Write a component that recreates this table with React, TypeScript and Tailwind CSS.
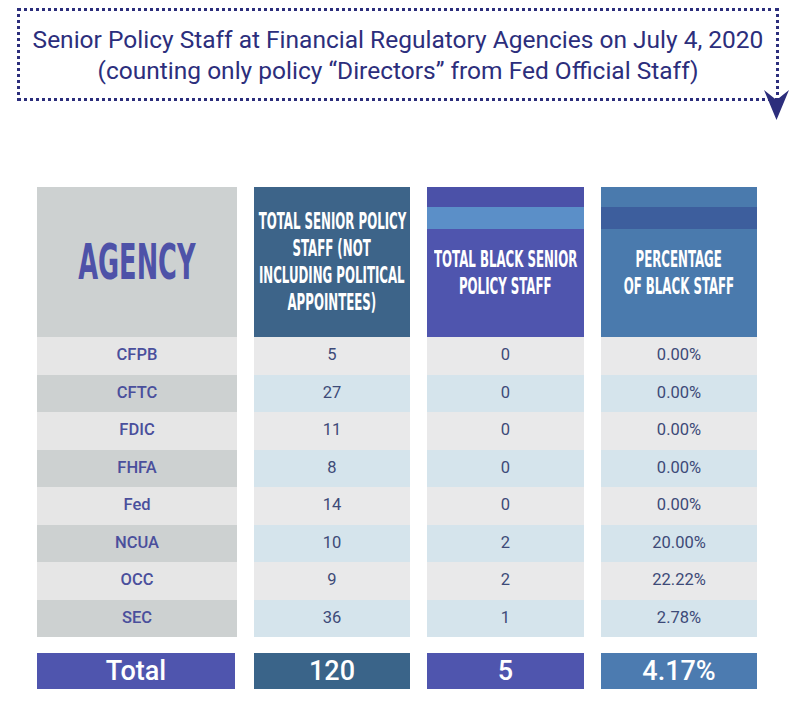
const rows = [
  { agency: "CFPB", total: "5", black: "0", pct: "0.00%" },
  { agency: "CFTC", total: "27", black: "0", pct: "0.00%" },
  { agency: "FDIC", total: "11", black: "0", pct: "0.00%" },
  { agency: "FHFA", total: "8", black: "0", pct: "0.00%" },
  { agency: "Fed", total: "14", black: "0", pct: "0.00%" },
  { agency: "NCUA", total: "10", black: "2", pct: "20.00%" },
  { agency: "OCC", total: "9", black: "2", pct: "22.22%" },
  { agency: "SEC", total: "36", black: "1", pct: "2.78%" },
];

const condensed = "font-['Liberation_Sans_Narrow','DejaVu_Sans_Condensed',sans-serif] font-bold";

const HeadLine = ({ children }: { children: React.ReactNode }) => (
  <span className="block whitespace-nowrap scale-x-[0.57]">{children}</span>
);

const App: React.FC = () => {
  return (
    <div className="w-[796px] h-[706px] bg-white font-['Roboto',sans-serif] overflow-hidden">
      <div className="pt-[8px] px-[17px]">
        <div className="relative h-[93px] border-[3px] border-dotted border-[#2c2e7c] flex flex-col items-center justify-center text-[#2c2e7c] text-[24.5px] leading-[31px]">
          <p>Senior Policy Staff at Financial Regulatory Agencies on July 4, 2020</p>
          <p>(counting only policy “Directors” from Fed Official Staff)</p>
          <svg className="absolute right-[-13px] bottom-[-22px]" width="25" height="30" viewBox="0 0 25 30">
            <polygon points="0,0 12.5,10 25,0 12.5,30" fill="#2c2e7c" />
          </svg>
        </div>
      </div>

      <div className="mt-[86px] ml-[37px] grid grid-cols-[200px_156px_157px_156px] gap-x-[17px]">
        {/* agency column */}
        <div className="flex flex-col">
          <div className="h-[150px] bg-[#cdd1d1] flex items-center justify-center">
            <span className={`${condensed} text-[#4e52a8] text-[50px] leading-none block scale-x-[0.57]`}>AGENCY</span>
          </div>
          {rows.map((r, i) => (
            <div
              key={r.agency}
              className={`h-[37.5px] flex items-center justify-center text-[16.5px] font-medium text-[#4a4f9c] ${i % 2 === 0 ? "bg-[#e6e6e6]" : "bg-[#cdd1d1]"}`}
            >
              {r.agency}
            </div>
          ))}
          <div className="mt-[16px] h-[36px] mr-[2px] bg-[#4f55ae] flex items-center justify-center text-white text-[27px] font-medium">
            Total
          </div>
        </div>

        {/* total staff column */}
        <div className="flex flex-col">
          <div className={`h-[150px] bg-[#3d6489] flex flex-col items-center justify-center text-white text-[23px] leading-[27px] ${condensed}`}>
            <HeadLine>TOTAL SENIOR POLICY</HeadLine>
            <HeadLine>STAFF (NOT</HeadLine>
            <HeadLine>INCLUDING POLITICAL</HeadLine>
            <HeadLine>APPOINTEES)</HeadLine>
          </div>
          {rows.map((r, i) => (
            <div
              key={r.agency}
              className={`h-[37.5px] flex items-center justify-center text-[16.5px] text-[#3d4a78] ${i % 2 === 0 ? "bg-[#e9e9ea]" : "bg-[#d5e4ec]"}`}
            >
              {r.total}
            </div>
          ))}
          <div className="mt-[16px] h-[36px] bg-[#3a6489] flex items-center justify-center text-white text-[27px] font-medium">
            120
          </div>
        </div>

        {/* black staff column */}
        <div className="flex flex-col">
          <div className="h-[150px] bg-[#4f55ae] flex flex-col">
            <div className="h-[20px] bg-[#4b51a8]" />
            <div className="h-[22px] bg-[#5b8fc8]" />
            <div className={`flex-1 flex flex-col items-center justify-center pb-[20px] text-white text-[23px] leading-[27px] ${condensed}`}>
              <HeadLine>TOTAL BLACK SENIOR</HeadLine>
              <HeadLine>POLICY STAFF</HeadLine>
            </div>
          </div>
          {rows.map((r, i) => (
            <div
              key={r.agency}
              className={`h-[37.5px] flex items-center justify-center text-[16.5px] text-[#3d4a78] ${i % 2 === 0 ? "bg-[#e9e9ea]" : "bg-[#d5e4ec]"}`}
            >
              {r.black}
            </div>
          ))}
          <div className="mt-[16px] h-[36px] bg-[#4f55ae] flex items-center justify-center text-white text-[27px] font-medium">
            5
          </div>
        </div>

        {/* percentage column */}
        <div className="flex flex-col">
          <div className="h-[150px] bg-[#4a7aad] flex flex-col">
            <div className="h-[20px] bg-[#4a7aad]" />
            <div className="h-[22px] bg-[#3d5e9d]" />
            <div className={`flex-1 flex flex-col items-center justify-center pb-[20px] text-white text-[23px] leading-[27px] ${condensed}`}>
              <HeadLine>PERCENTAGE</HeadLine>
              <HeadLine>OF BLACK STAFF</HeadLine>
            </div>
          </div>
          {rows.map((r, i) => (
            <div
              key={r.agency}
              className={`h-[37.5px] flex items-center justify-center text-[16.5px] text-[#3d4a78] ${i % 2 === 0 ? "bg-[#e9e9ea]" : "bg-[#d5e4ec]"}`}
            >
              {r.pct}
            </div>
          ))}
          <div className="mt-[16px] h-[36px] bg-[#4c7bb0] flex items-center justify-center text-white text-[27px] font-medium">
            4.17%
          </div>
        </div>
      </div>
    </div>
  );
};

export default App;
